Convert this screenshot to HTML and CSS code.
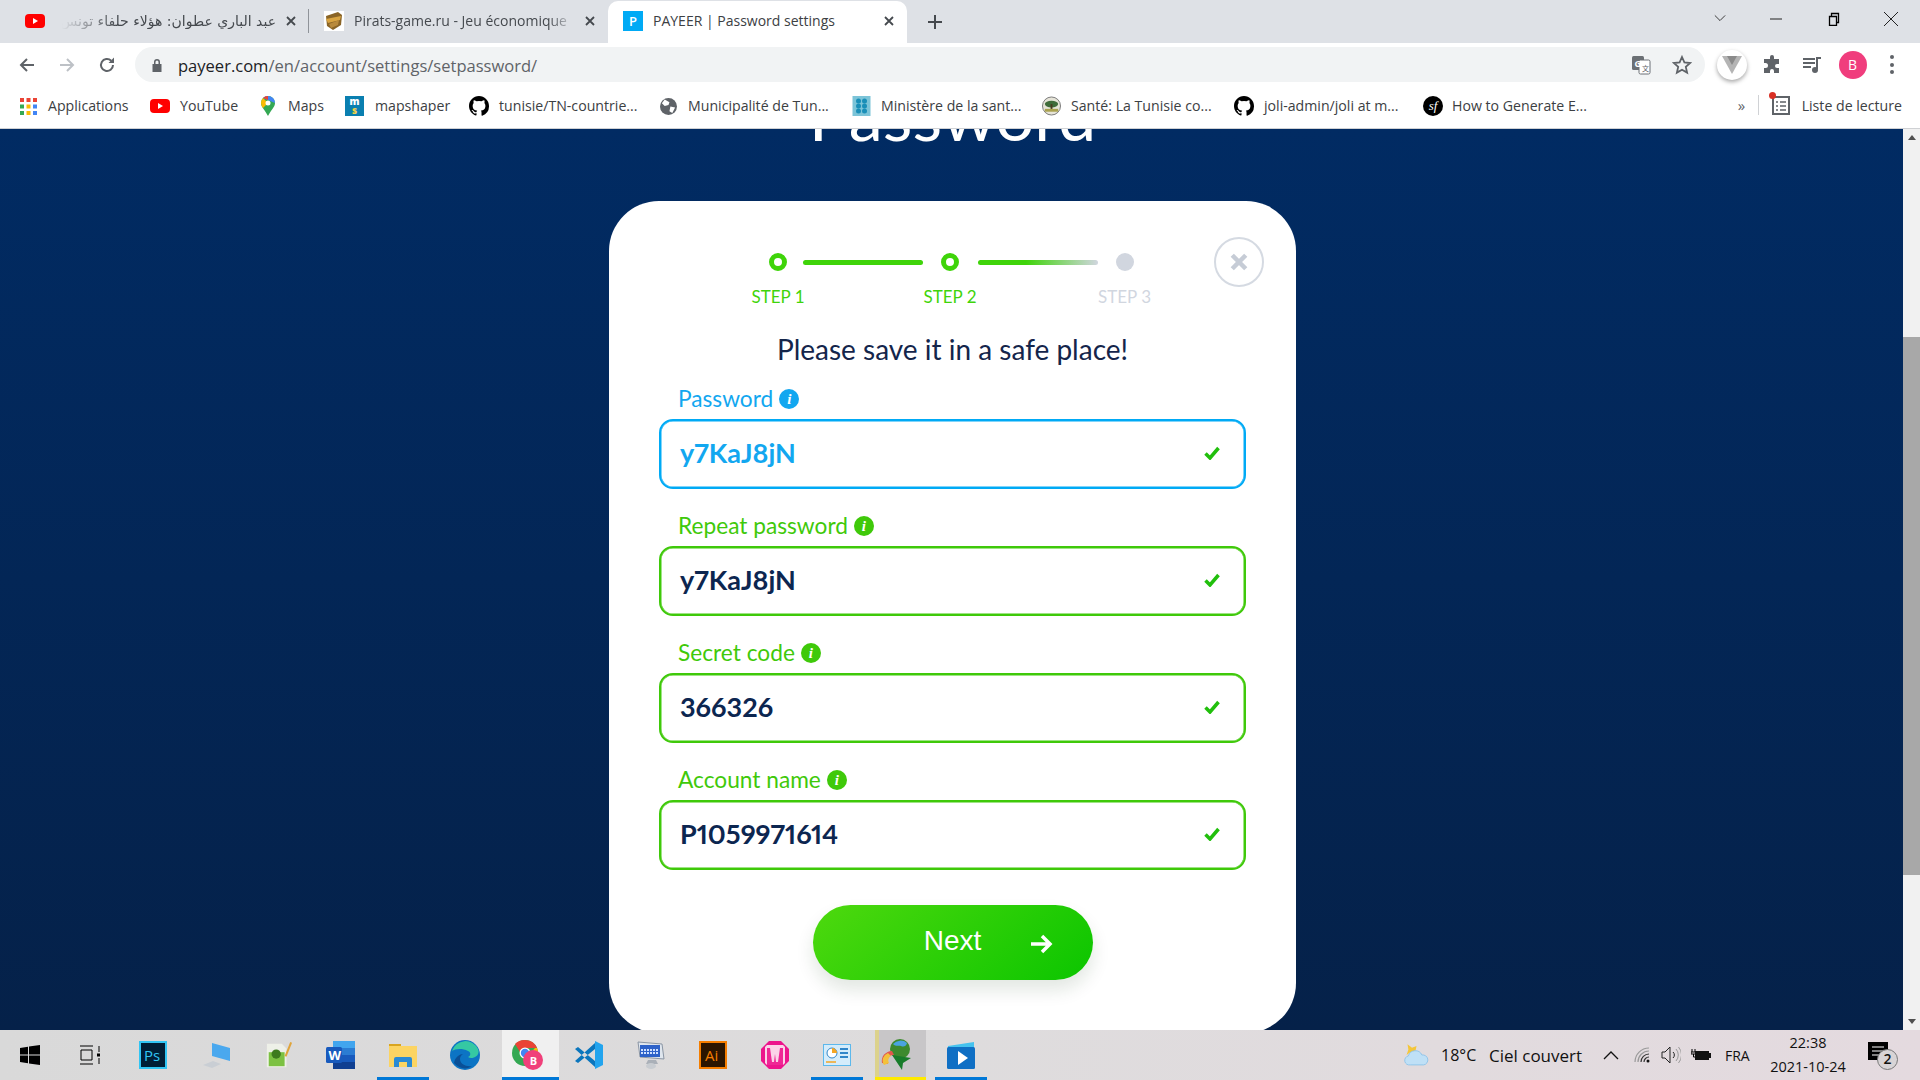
FILE: index.html
```html
<!DOCTYPE html>
<html lang="en">
<head>
<meta charset="utf-8">
<title>PAYEER | Password settings</title>
<link rel="stylesheet" href="styles.css">
</head>
<body>
<header class="tabstrip">
  <div class="tab">
    <svg class="fav" viewBox="0 0 20 14"><rect width="20" height="14" rx="4" fill="#f00"/><path d="M8 4l5 3-5 3z" fill="#fff"/></svg>
    <span class="tab-title fade rtl">عبد الباري عطوان: هؤلاء حلفاء تونس</span>
    <svg class="tab-x" viewBox="0 0 10 10"><path d="M1 1l8 8M9 1l-8 8"/></svg>
  </div>
  <i class="tab-sep"></i>
  <div class="tab">
    <svg class="fav" viewBox="0 0 20 20"><rect width="20" height="20" fill="#fff"/><path d="M2 5l12-4 4 3-1 10-8 5-6-4z" fill="#8a6426"/><path d="M2 8l15-3-1 4-12 3z" fill="#d9a441"/><path d="M5 13l10-4-1 5-7 3z" fill="#b98a3c"/></svg>
    <span class="tab-title fade">Pirats-game.ru - Jeu économique</span>
    <svg class="tab-x" viewBox="0 0 10 10"><path d="M1 1l8 8M9 1l-8 8"/></svg>
  </div>
  <div class="tab tab-active">
    <span class="fav fav-p">P</span>
    <span class="tab-title">PAYEER | Password settings</span>
    <svg class="tab-x" viewBox="0 0 10 10"><path d="M1 1l8 8M9 1l-8 8"/></svg>
  </div>
  <svg class="newtab" viewBox="0 0 14 14"><path d="M7 0v14M0 7h14"/></svg>
  <div class="winctl">
    <svg viewBox="0 0 14 14"><path d="M1 4l6 6 6-6"/></svg>
    <svg viewBox="0 0 14 14"><path d="M1 7h12"/></svg>
    <svg viewBox="0 0 14 14"><path d="M2.500 4.500h7v9h-7zM4.500 4V1.500h7v9H10"/></svg>
    <svg viewBox="0 0 14 14"><path d="M0 0l14 14M14 0L0 14"/></svg>
  </div>
</header>

<nav class="toolbar">
  <div class="navbtn"><svg viewBox="0 0 18 18" class="ico-stroke"><path d="M16 9H3M9 3L3 9l6 6"/></svg></div>
  <div class="navbtn dim"><svg viewBox="0 0 18 18" class="ico-stroke"><path d="M2 9h13M9 3l6 6-6 6"/></svg></div>
  <div class="navbtn"><svg viewBox="0 0 18 18" class="ico-stroke"><path d="M15 9a6 6 0 1 1-1.800-4.300"/><path class="solid" d="M16 1.500V7h-5.500z"/></svg></div>
  <div class="omnibox">
    <svg class="lock" viewBox="0 0 12 14"><path d="M3 6V4a3 3 0 0 1 6 0v2h1.500v8h-9V6zM4.500 6h3V4a1.500 1.500 0 0 0-3 0z" fill="#5f6368"/></svg>
    <span class="url"><b>payeer.com</b>/en/account/settings/setpassword/</span>
    <svg class="omni-ico" viewBox="0 0 20 20"><rect x="1" y="1" width="12" height="14" rx="1.500" fill="#6b6f74"/><rect x="8" y="5" width="11" height="14" rx="1.500" fill="#fff" stroke="#6b6f74"/><text x="3.500" y="12" class="gt">G</text><text x="11" y="16" class="gt2">文</text></svg>
    <svg class="omni-ico star" viewBox="0 0 20 20"><path d="M10 2l2.400 5.400 5.800.6-4.400 3.900 1.300 5.700L10 14.700l-5.100 2.900 1.300-5.700L1.800 8l5.800-.6z"/></svg>
  </div>
  <div class="ext-group">
    <div class="ext"><span class="vue"><svg viewBox="0 0 20 18"><path d="M0 0h20L10 18z" fill="#b4b4b4"/><path d="M5 0h10l-5 9z" fill="#8a8a8a"/></svg></span></div>
    <div class="ext"><svg viewBox="0 0 20 20" class="w20"><path d="M8 2a2 2 0 0 1 4 0v2h5v5h-2a2 2 0 0 0 0 4h2v5H12v-2a2 2 0 0 0-4 0v2H2v-5h1.500a2.500 2.500 0 0 0 0-5H2V4h6z" fill="#5f6368"/></svg></div>
    <div class="ext"><svg viewBox="0 0 20 20" class="w20"><path d="M1 4h12M1 8h12M1 12h8" stroke="#5f6368" stroke-width="2" fill="none"/><path d="M15 14V3h4" stroke="#5f6368" stroke-width="2" fill="none"/><circle cx="13" cy="15" r="3" fill="#5f6368"/></svg></div>
    <div class="ext"><span class="avatar">B</span></div>
    <div class="ext"><span class="dots"><i></i><i></i><i></i></span></div>
  </div>
</nav>

<nav class="bookmarks">
  <div class="bm-grid">
    <div class="bm"><svg viewBox="0 0 17 17" class="bm-ico"><g><rect width="4" height="4" fill="#ea4335"/><rect x="6.500" width="4" height="4" fill="#ea4335"/><rect x="13" width="4" height="4" fill="#ea4335"/><rect y="6.500" width="4" height="4" fill="#34a853"/><rect x="6.500" y="6.500" width="4" height="4" fill="#fbbc04"/><rect x="13" y="6.500" width="4" height="4" fill="#4285f4"/><rect y="13" width="4" height="4" fill="#34a853"/><rect x="6.500" y="13" width="4" height="4" fill="#fbbc04"/><rect x="13" y="13" width="4" height="4" fill="#4285f4"/></g></svg>Applications</div>
    <div class="bm"><svg viewBox="0 0 20 14" class="bm-ico wide"><rect width="20" height="14" rx="4" fill="#f00"/><path d="M8 4l5 3-5 3z" fill="#fff"/></svg>YouTube</div>
    <div class="bm"><svg viewBox="0 0 14 20" class="bm-ico tall"><path d="M7 0a7 7 0 0 1 7 7c0 4-4 7-7 13C4 14 0 11 0 7a7 7 0 0 1 7-7z" fill="#34a853"/><path d="M7 0a7 7 0 0 1 7 7L2 2a7 7 0 0 1 5-2z" fill="#4285f4"/><path d="M0 7a7 7 0 0 1 2-5l5 5-5 5a9 9 0 0 1-2-5z" fill="#fbbc04"/><path d="M2 2a7 7 0 0 1 5-2v4z" fill="#ea4335"/><circle cx="7" cy="7" r="2.500" fill="#fff"/></svg>Maps</div>
    <div class="bm"><span class="ms"><b>m</b><b class="ms2">s</b></span>mapshaper</div>
    <div class="bm"><svg viewBox="0 0 16 16" class="bm-ico gh"><path d="M8 0C3.580 0 0 3.580 0 8c0 3.540 2.290 6.530 5.470 7.590.4.070.55-.17.55-.38v-1.340c-2.010.37-2.530-.49-2.690-.94-.09-.23-.48-.94-.82-1.130-.28-.15-.68-.52-.01-.53.63-.01 1.080.58 1.230.82.720 1.210 1.870.87 2.330.66.070-.52.280-.87.510-1.070-1.780-.2-3.640-.89-3.640-3.950 0-.87.310-1.590.820-2.150-.08-.2-.360-1.020.08-2.120 0 0 .67-.21 2.200.82a7.600 7.600 0 0 1 4 0c1.530-1.040 2.200-.82 2.200-.82.440 1.100.160 1.920.080 2.120.51.560.82 1.270.82 2.150 0 3.070-1.870 3.750-3.650 3.950.29.250.54.730.54 1.480v2.200c0 .21.150.46.550.38A8 8 0 0 0 16 8c0-4.420-3.580-8-8-8z"/></svg>tunisie/TN-countrie...</div>
    <div class="bm"><svg viewBox="0 0 18 18" class="bm-ico"><circle cx="9" cy="9" r="9" fill="#5f6368"/><path d="M5 1.500l5 3-1 3-4 1-3-3zM11 9l5 1-3 6-3-2z" fill="#fff"/></svg>Municipalité de Tun...</div>
    <div class="bm"><svg viewBox="0 0 18 20" class="bm-ico big"><rect width="18" height="20" fill="#7cc4d8"/><g fill="#1a8fb8"><circle cx="6" cy="5" r="2.500"/><circle cx="12" cy="5" r="2.500"/><circle cx="6" cy="10" r="2.500"/><circle cx="12" cy="10" r="2.500"/><circle cx="6" cy="15" r="2.500"/><circle cx="12" cy="15" r="2.500"/></g></svg>Ministère de la sant...</div>
    <div class="bm"><svg viewBox="0 0 20 20" class="bm-ico big"><circle cx="10" cy="10" r="9.500" fill="#e6e4d8" stroke="#777"/><ellipse cx="10" cy="8" rx="7" ry="3.500" fill="#3f6b3a"/><rect x="9" y="8" width="2" height="6" fill="#4a3a20"/><rect x="3" y="13" width="14" height="3" fill="#a9a14f"/></svg>Santé: La Tunisie co...</div>
    <div class="bm"><svg viewBox="0 0 16 16" class="bm-ico gh"><path d="M8 0C3.580 0 0 3.580 0 8c0 3.540 2.290 6.530 5.470 7.590.4.070.55-.17.55-.38v-1.340c-2.010.37-2.530-.49-2.690-.94-.09-.23-.48-.94-.82-1.130-.28-.15-.68-.52-.01-.53.63-.01 1.080.58 1.230.82.720 1.210 1.870.87 2.330.66.070-.52.280-.87.510-1.070-1.780-.2-3.640-.89-3.640-3.950 0-.87.310-1.590.820-2.150-.08-.2-.360-1.020.08-2.120 0 0 .67-.21 2.200.82a7.600 7.600 0 0 1 4 0c1.530-1.040 2.200-.82 2.200-.82.440 1.100.160 1.920.080 2.120.51.560.82 1.270.82 2.150 0 3.070-1.870 3.750-3.650 3.950.29.250.54.730.54 1.480v2.200c0 .21.150.46.550.38A8 8 0 0 0 16 8c0-4.420-3.580-8-8-8z"/></svg>joli-admin/joli at m...</div>
    <div class="bm"><span class="sf">sf</span>How to Generate E...</div>
  </div>
  <div class="bm-right">
    <span class="more">»</span>
    <i class="bm-sep"></i>
    <span class="readlist"><svg viewBox="0 0 18 20" class="bm-ico"><rect x="1" y="2" width="16" height="17" fill="#fff" stroke="#5f6368" stroke-width="2"/><path d="M4 7h2M8 7h6M4 11h2M8 11h6M4 15h2M8 15h6" stroke="#5f6368" stroke-width="1.500"/></svg><i class="red-dot"></i></span>
    <span class="bm-label">Liste de lecture</span>
  </div>
</nav>

<main class="viewport">
  <div class="page">
    <h1 class="page-title">Password</h1>
    <section class="card">
      <button class="close" type="button" aria-label="Close"><svg viewBox="0 0 12 12"><path d="M1.500 1.500l9 9M10.500 1.500l-9 9"/></svg></button>
      <div class="dots-row">
        <i class="dot"></i><i class="bar"></i><i class="dot"></i><i class="bar bar-fade"></i><i class="dot dot-off"></i>
      </div>
      <div class="labels-row">
        <span>STEP 1</span><span>STEP 2</span><span class="off">STEP 3</span>
      </div>
      <h2 class="subtitle">Please save it in a safe place!</h2>
      <div class="fields">
        <div class="field field-blue">
          <div class="field-label">Password <i class="info">i</i></div>
          <div class="input"><span>y7KaJ8jN</span><svg class="check" viewBox="0 0 16 14"><path d="M1.500 7.500L6 12 14.500 2"/></svg></div>
        </div>
        <div class="field">
          <div class="field-label">Repeat password <i class="info">i</i></div>
          <div class="input"><span>y7KaJ8jN</span><svg class="check" viewBox="0 0 16 14"><path d="M1.500 7.500L6 12 14.500 2"/></svg></div>
        </div>
        <div class="field">
          <div class="field-label">Secret code <i class="info">i</i></div>
          <div class="input"><span>366326</span><svg class="check" viewBox="0 0 16 14"><path d="M1.500 7.500L6 12 14.500 2"/></svg></div>
        </div>
        <div class="field">
          <div class="field-label">Account name <i class="info">i</i></div>
          <div class="input"><span>P1059971614</span><svg class="check" viewBox="0 0 16 14"><path d="M1.500 7.500L6 12 14.500 2"/></svg></div>
        </div>
      </div>
      <button class="next" type="button"><span>Next</span><svg viewBox="0 0 24 20"><path d="M2 10h19M13 2l8 8-8 8"/></svg></button>
    </section>
  </div>
  <aside class="scrollbar">
    <span class="arrow-up"></span>
    <div class="track"><div class="thumb"></div></div>
    <span class="arrow-down"></span>
  </aside>
</main>

<footer class="taskbar">
  <div class="apps">
    <div class="app"><svg viewBox="0 0 20 20" class="s20"><path d="M0 3l8-1.200V9.500H0zM9 1.600L20 0v9.500H9zM0 10.500h8v7.700L0 17zM9 10.500h11V20L9 18.400z" fill="#000"/></svg></div>
    <div class="app"><svg viewBox="0 0 20 20" class="s20 line"><path d="M0 1h13M0 19h13M1 5h11v10H1zM19 1v6M19 13v6"/><rect class="solid" x="17" y="8.500" width="3.500" height="3"/></svg></div>
    <div class="app"><svg viewBox="0 0 28 28" class="s28"><rect x="1" y="1" width="26" height="26" fill="#001e36" stroke="#31c5f4" stroke-width="2"/><text x="5" y="20" class="ps">Ps</text></svg></div>
    <div class="app"><svg viewBox="0 0 28 28" class="s28"><path d="M9 2l18 5v13L9 15z" fill="#4aa8ee"/><path d="M0 24l10-4 8 3-9 4z" fill="#c9ced4"/></svg></div>
    <div class="app"><svg viewBox="0 0 28 30" class="s28"><path d="M1 3h16l5 5v20H1z" fill="#eef0e8"/><rect x="3" y="12" width="17" height="15" fill="#7cc142"/><circle cx="11" cy="14" r="5" fill="#3d7a1e"/><path d="M20 16l6-15 2 1-6 15z" fill="#e0a43a"/></svg></div>
    <div class="app"><svg viewBox="0 0 30 30" class="s30"><rect x="7" y="1" width="22" height="28" rx="2" fill="#2b7cd3"/><rect x="7" y="8" width="22" height="7" fill="#2b7cd3"/><rect x="7" y="1" width="22" height="7" fill="#41a5ee"/><rect x="7" y="15" width="22" height="7" fill="#185abd"/><rect x="7" y="22" width="22" height="7" fill="#103f91"/><rect y="7" width="16" height="16" rx="1.500" fill="#185abd"/><text x="2.500" y="19.500" class="wd">W</text></svg></div>
    <div class="app app-on"><svg viewBox="0 0 28 28" class="s28"><path d="M0 3h12v4H0z" fill="#d9a520"/><rect y="5" width="28" height="21" fill="#fcd462"/><path d="M5 26V18a2 2 0 0 1 2-2h14a2 2 0 0 1 2 2v8h-5v-5h-8v5z" fill="#2a8ad4"/></svg></div>
    <div class="app"><svg viewBox="0 0 30 30" class="s30"><circle cx="15" cy="15" r="15" fill="#0c74c4"/><path d="M2 11a14 14 0 0 1 26-2c3 7-6 11-10 8 3-1 3-5 0-6-6-3-13-2-16 0z" fill="#35c8a3"/><path d="M10 19c0 5 6 8 12 7-5 4-13 3-18-3 1-6 6-9 9-9-2 1-3 3-3 5z" fill="#0a4f96"/></svg></div>
    <div class="app app-chrome"><svg viewBox="0 0 32 32" class="s32"><circle cx="13" cy="14" r="13" fill="#34a853"/><path d="M13 1a13 13 0 0 1 12 8H13a5 5 0 0 0-5 4L3 5a13 13 0 0 1 10-4z" fill="#ea4335"/><path d="M25 9a13 13 0 0 1-6 17l-4-8 8-9z" fill="#fbbc04"/><circle cx="13" cy="14" r="5.500" fill="#fff"/><circle cx="13" cy="14" r="4.200" fill="#4285f4"/><circle cx="21" cy="21" r="10" fill="#f0407a"/><text x="17.800" y="25.500" class="chb">B</text></svg></div>
    <div class="app"><svg viewBox="0 0 30 30" class="s30"><path d="M1 9l3-2 17 14v6zM1 21l3 2 17-14V3z" fill="#0b76bd"/><path d="M21 1l8 4v20l-8 4z" fill="#22a4ee"/></svg></div>
    <div class="app"><svg viewBox="0 0 30 30" class="s30"><path d="M2 2l24 2 2 15-24-2z" fill="#dfe6ee" stroke="#8a95a3"/><rect x="4" y="5" width="20" height="12" fill="#2d62c9"/><path d="M5 10h18M5 13h18" stroke="#cfe0ff" stroke-width="2" stroke-dasharray="2 1"/><path d="M12 20h8l2 4h-12z" fill="#aab0b8"/><ellipse cx="15" cy="26" rx="5" ry="3" fill="#c8ccd1"/></svg></div>
    <div class="app"><svg viewBox="0 0 28 28" class="s28"><rect x="1" y="1" width="26" height="26" fill="#2b1500" stroke="#f47d00" stroke-width="2"/><text x="6" y="20" class="ai">Ai</text></svg></div>
    <div class="app"><svg viewBox="0 0 28 28" class="s28"><path d="M8 0h12l8 8v12l-8 8H8l-8-8V8z" fill="#ed148c"/><path d="M6 4h16l2 2v16l-2 2H6l-2-2V6z" fill="#fbd3e8"/><path d="M6 7h3l2 14h2l1-8 1 8h2l2-14h3v17H6z" fill="#ed148c" opacity=".9"/></svg></div>
    <div class="app app-on"><svg viewBox="0 0 28 22" class="s28"><rect width="28" height="22" fill="#5cb8ec"/><rect x="1" y="1" width="26" height="20" fill="#d4ecfb"/><circle cx="9" cy="9" r="5" fill="#fff" stroke="#3186c9"/><path d="M9 9V4a5 5 0 0 1 5 5z" fill="#f5a623"/><path d="M17 5h8M17 9h8M17 13h8" stroke="#3186c9" stroke-width="2"/><path d="M3 18h10" stroke="#f5a623" stroke-width="1.500"/></svg></div>
    <div class="app app-idm"><svg viewBox="0 0 32 32" class="s32"><circle cx="19" cy="10" r="10" fill="#3d8a2e"/><path d="M12 5a10 10 0 0 1 14-1c-1 4-4 4-6 3s-5 1-8-2z" fill="#4aa3e0"/><path d="M1 24a10 10 0 0 1 10-12l2 4a6 6 0 0 0-6 9z" fill="#e2574c"/><path d="M3 26a8 8 0 0 1 4-12l3 3a5 5 0 0 0-2 7z" fill="#f3c13a"/><path d="M11 16l19 3-8 5-1 7z" fill="#187c2a"/></svg></div>
    <div class="app app-on"><svg viewBox="0 0 30 30" class="s30"><path d="M2 6l26-4v6H2z" fill="#45c2ee"/><rect x="1" y="7" width="28" height="22" rx="1.500" fill="#0f6fc4"/><path d="M12 11l10 7-10 7z" fill="#fff"/></svg></div>
  </div>
  <div class="tray">
    <svg viewBox="0 0 30 26" class="weather"><path d="M8 10l-4 3 2-6-1-6 5 4 5-2-1 5z" fill="#f4c63a"/><path d="M8 24a5 5 0 0 1-2-10 8 8 0 0 1 15-1 5.500 5.500 0 0 1 2 11z" fill="#bfe0f6" stroke="#8cc3ea"/></svg>
    <span class="tray-temp">18°C</span>
    <span class="tray-sky">Ciel couvert</span>
    <svg viewBox="0 0 16 10" class="chev"><path d="M1 9l7-7 7 7"/></svg>
    <svg viewBox="0 0 16 16" class="wifi"><path d="M1 15A14 14 0 0 1 15 1M4 15A11 11 0 0 1 15 4" stroke="#999"/><path d="M7 15a8 8 0 0 1 8-8M10 15a5 5 0 0 1 5-5" stroke="#333"/><circle cx="14" cy="14" r="1.500" fill="#111"/></svg>
    <svg viewBox="0 0 20 18" class="speaker"><path d="M1 6h3l5-5v16l-5-5H1z" fill="none" stroke="#222"/><path d="M12 6a4 4 0 0 1 0 6" stroke="#222" fill="none"/><path d="M15 3a9 9 0 0 1 0 12M17.500 1a12 12 0 0 1 0 16" stroke="#999" fill="none"/></svg>
    <svg viewBox="0 0 20 12" class="battery"><path d="M1 0v3M4 0v3M0 3h5v2H0zM2.500 5v3h2" stroke="#000" fill="none"/><rect x="4" y="2" width="14" height="9" fill="#111"/><rect x="18" y="4" width="2" height="5" fill="#111"/></svg>
    <span class="tray-lang">FRA</span>
    <div class="clock"><span>22:38</span><span>2021-10-24</span></div>
    <div class="notif"><svg viewBox="0 0 20 18"><rect width="20" height="18" fill="#000"/><path d="M4 5h12M4 9h12M4 13h8" stroke="#fff" stroke-width="1.200"/></svg><i class="notif-badge">2</i></div>
  </div>
</footer>
</body>
</html>
```
FILE: styles.css
```css
* { box-sizing: border-box; }
html, body { margin: 0; height: 100%; }
body {
  width: 1920px; height: 1080px; overflow: hidden;
  display: flex; flex-direction: column;
  font-family: "Open Sans", "DejaVu Sans", sans-serif;
  color: #3c4043;
}
i { font-style: normal; }

/* tab strip */
.tabstrip { height: 43px; flex: none; background: #dee1e6; display: flex; align-items: center; padding-left: 10px; }
.tab { width: 299px; height: 43px; display: flex; align-items: center; padding: 0 13px 2px 15px; flex: none; margin-right: -1px; }
.tab-active { background: #fff; border-radius: 10px 10px 0 0; margin-left: 1px; margin-top: 2px; padding-bottom: 4px; }
.fav { width: 20px; height: 20px; flex: none; display: block; }
.fav-p { background: #00aaf5; color: #fff; font-size: 13px; font-weight: 600; text-align: center; line-height: 20px; }
.tab-title { flex: 1; margin: 0 10px 0 10px; font-size: 14px; white-space: nowrap; overflow: hidden; color: #45494e; }
.tab-active .tab-title { color: #3c4043; }
.fade { -webkit-mask-image: linear-gradient(90deg, #000 88%, transparent 100%); mask-image: linear-gradient(90deg, #000 88%, transparent 100%); }
.rtl { direction: rtl; text-align: right; font-family: "DejaVu Sans", sans-serif; font-size: 14px; -webkit-mask-image: linear-gradient(270deg, #000 72%, transparent 97%); mask-image: linear-gradient(270deg, #000 72%, transparent 97%); }
.tab-x { width: 10px; height: 10px; flex: none; fill: none; stroke: #45494e; stroke-width: 1.800; }
.tab-sep { width: 1px; height: 24px; background: #8f9399; flex: none; margin: 0 0 2px 0; }
.newtab { width: 14px; height: 14px; flex: none; margin-left: 22px; fill: none; stroke: #45494e; stroke-width: 2; }
.winctl { margin-left: auto; display: grid; grid-template-columns: repeat(4, 57.500px); justify-items: center; margin-bottom: 6px; }
.winctl svg { width: 14px; height: 14px; fill: none; stroke: #222; stroke-width: 1; }
.winctl svg:first-child { width: 12px; height: 12px; margin-left: 2px; }
.winctl svg:nth-child(3) { stroke-width: 1.300; stroke: #000; }

/* toolbar */
.toolbar { height: 43px; flex: none; background: #fff; display: flex; align-items: center; padding-left: 7px; }
.navbtn { width: 40px; display: flex; justify-content: center; }
.navbtn svg { width: 18px; height: 18px; }
.ico-stroke { fill: none; stroke: #5f6368; stroke-width: 2; }
.ico-stroke .solid { fill: #5f6368; stroke: none; }
.dim .ico-stroke { stroke: #bdc1c6; }
.omnibox { width: 1570px; height: 35px; margin-left: 8px; border-radius: 18px; background: #f1f3f4; display: flex; align-items: center; padding-left: 16px; padding-right: 13px; }
.lock { width: 12px; height: 14px; flex: none; }
.url { margin-left: 15px; font-size: 16.550px; line-height: 22px; padding-top: 2px; color: #5f6368; }
.url b { font-weight: 400; color: #202124; }
.omni-ico { width: 20px; height: 20px; margin-left: 20px; flex: none; }
.omni-ico:nth-of-type(2) { margin-left: auto; }
.star { fill: none; stroke: #5f6368; stroke-width: 1.800; margin-left: 21px; }
.gt { font-size: 9px; font-weight: 700; fill: #fff; font-family: "Open Sans", sans-serif; }
.gt2 { font-size: 7px; fill: #5f6368; font-family: "Noto Sans CJK SC", sans-serif; }
.ext-group { display: grid; grid-template-columns: repeat(5, 40px); margin-left: 7px; justify-items: center; align-items: center; }
.ext { display: flex; align-items: center; justify-content: center; }
.w20 { width: 20px; height: 20px; }
.vue { width: 30px; height: 30px; border-radius: 50%; background: #fff; box-shadow: 0 2px 4px rgba(0,0,0,.35); display: flex; align-items: center; justify-content: center; }
.vue svg { width: 20px; height: 18px; }
.avatar { width: 28px; height: 28px; border-radius: 50%; background: #f03d7d; color: #fff; font-size: 14px; text-align: center; line-height: 28px; margin-left: 1px; }
.dots { display: flex; flex-direction: column; gap: 3.500px; }
.dots i { width: 4px; height: 4px; border-radius: 50%; background: #5f6368; }

/* bookmarks */
.bookmarks { height: 43px; flex: none; background: #fff; border-bottom: 1px solid #cfd1d4; display: flex; align-items: center; padding-left: 20px; }
.bm-grid { display: grid; grid-template-columns: 130px 110px 85px 124px 191px 192px 190px 192px 189px 170px; flex: none; }
.bm { display: flex; align-items: center; gap: 11px; font-size: 14.150px; line-height: 20px; color: #3c4043; white-space: nowrap; margin-top: -2px; }
.bm-ico { width: 17px; height: 17px; flex: none; }
.bm-ico.wide { width: 20px; height: 14px; margin-right: -1px; }
.bm-ico.tall { width: 14px; height: 20px; margin-left: 1px; margin-right: 2px; }
.bm-ico.gh { width: 20px; height: 20px; margin-right: -1px; }
.bm-ico.big { width: 19px; height: 20px; margin-right: -1px; }
.ms { width: 19px; height: 20px; background: #0a7fb0; color: #fff; font-size: 10px; line-height: 9px; text-align: center; display: flex; flex-direction: column; font-weight: 700; padding-top: 1px; }
.ms b { display: block; }
.ms2 { color: #f0d24a; }
.sf { width: 20px; height: 20px; border-radius: 50%; background: #000; color: #fff; font-family: "Liberation Serif", serif; font-style: italic; font-size: 13px; line-height: 19px; text-align: center; flex: none; margin-right: -2px; }
.bm-right { margin-left: auto; display: flex; align-items: center; padding-right: 18px; margin-top: -4px; }
.more { font-size: 15px; color: #5f6368; width: 12px; margin-left: 3px; margin-right: -3px; }
.bm-sep { width: 1px; height: 20px; background: #d0d2d5; margin: 0 13px 0 11px; }
.readlist { position: relative; display: flex; }
.readlist .bm-ico { width: 18px; height: 20px; }
.red-dot { position: absolute; left: -3px; top: -3px; width: 7px; height: 7px; border-radius: 50%; background: #d93025; }
.bm-label { margin-left: 12px; font-size: 14.150px; color: #3c4043; white-space: nowrap; }

/* page */
.viewport { flex: 1; min-height: 0; display: flex; overflow: hidden; }
.page { flex: 1; background: linear-gradient(#012b63, #052149); overflow: hidden; padding-left: 2px; display: flex; flex-direction: column; align-items: center; }
.page-title { margin: -62px 0 0; height: 134px; line-height: 96px; font-family: Lato, sans-serif; font-weight: 400; font-size: 68.500px; color: #fff; flex: none; }
.card { width: 687px; height: 832px; flex: none; background: #fff; border-radius: 50px; padding: 52px 50px 0; position: relative; }
.close { position: absolute; right: 32px; top: 36px; width: 50px; height: 50px; border: 2px solid #d5dae2; border-radius: 50%; background: #fff; padding: 0; display: flex; align-items: center; justify-content: center; }
.close svg { width: 18px; height: 18px; fill: none; stroke: #c6ccd6; stroke-width: 3; }
.dots-row { display: flex; align-items: center; margin-left: 110px; }
.dot { width: 18px; height: 18px; border-radius: 50%; border: 5px solid #3fd40a; background: #fff; flex: none; }
.dot-off { border: 0; background: #d1d6df; }
.bar { width: 120px; height: 5px; border-radius: 3px; background: #3fd40a; margin: 0 18px 0 16px; flex: none; }
.bar-fade { background: linear-gradient(90deg, #3fd40a 40%, #d1d6df 100%); margin: 0 18px 0 19px; }
.labels-row { display: grid; grid-template-columns: repeat(3, 100px); column-gap: 72px; margin: 16px 0 0 69px; font: 400 17px/20px Lato, sans-serif; color: #3fd40a; text-align: center; }
.labels-row .off { color: #d1d6df; margin-left: 5px; }
.subtitle { margin: 24px 0 17px; font: 400 28px/36px Lato, sans-serif; color: #14254b; text-align: center; }
.fields { display: flex; flex-direction: column; gap: 22px; }
.field { display: flex; flex-direction: column; gap: 5px; color: #3fc90a; }
.field-blue { color: #12a7f0; }
.field-label { height: 30px; padding-left: 19px; font: 400 22.700px/30px Lato, sans-serif; display: flex; align-items: center; gap: 6px; }
.info { width: 20px; height: 20px; border-radius: 50%; background: currentColor; display: flex; align-items: center; justify-content: center; font: italic 700 15px/20px "Liberation Serif", serif; -webkit-text-fill-color: #fff; }
.input { height: 70px; border: 2px solid currentColor; box-shadow: inset 0 0 0 .5px currentColor; border-radius: 14px; display: flex; align-items: center; justify-content: space-between; padding: 0 24px 3px 19px; background: #fff; font: 700 27px/32px Lato, sans-serif; font-variant-numeric: proportional-nums; color: #3fc90a; }
.field-blue .input { color: #00aaf5; }
.input span { color: #0c2650; }
.field-blue .input span { color: #12a7f0; }
.check { width: 16px; height: 14px; fill: none; stroke: #21bf0c; stroke-width: 3.500; }
.next { width: 280px; height: 75px; margin: 35px auto 0; display: flex; align-items: center; justify-content: center; border: 0; border-radius: 38px; background: linear-gradient(140deg, #4ed90e, #0bc500); box-shadow: 0 10px 18px rgba(20,60,20,.12); color: #fff; font: 400 28px/36px "Liberation Sans", sans-serif; position: relative; padding: 0 0 3px 0; }
.next svg { position: absolute; right: 40px; top: 29px; width: 24px; height: 20px; fill: none; stroke: #fff; stroke-width: 3.500; }

/* scrollbar */
.scrollbar { width: 17px; flex: none; background: #f1f1f1; display: flex; flex-direction: column; align-items: center; }
.arrow-up, .arrow-down { flex: none; width: 0; border-left: 4px solid transparent; border-right: 4px solid transparent; margin: 6px 0; height: 5px; }
.arrow-up { border-bottom: 5px solid #505050; }
.arrow-down { border-top: 5px solid #505050; }
.track { flex: 1; width: 100%; padding-top: 191px; }
.thumb { height: 538px; background: #a8a8a8; }

/* taskbar */
.taskbar { height: 50px; flex: none; background: linear-gradient(90deg, #d9d9d9 0%, #dedcdd 50%, #e4dadf 100%); display: flex; align-items: stretch; }
.apps { display: grid; grid-template-columns: 60px 60px 66px repeat(13, 62px); flex: none; }
.app { display: flex; align-items: center; justify-content: center; position: relative; }
.app-on::after, .app-chrome::after, .app-idm::after { content: ""; position: absolute; left: 5px; right: 5px; bottom: 0; height: 3px; background: #0078d7; }
.app-chrome { background: #f0f0f0; margin: 0 -1px 0 6px; padding-right: 5px; }
.app-chrome::after { left: 0; right: 0; }
.app-idm { background: #c8c6c8; margin: 0 4px 0 7px; border-left: 4px solid #dcd28c; padding-right: 12px; }
.app-idm::after { left: -4px; right: 0; background: #ffea00; }
.s20 { width: 20px; height: 20px; }
.s28 { width: 28px; height: 28px; }
.s30 { width: 30px; height: 30px; }
.s32 { width: 32px; height: 32px; }
.line { fill: none; stroke: #000; stroke-width: 1; }
.line .solid { fill: #000; stroke: none; }
.ps { font: 400 15px "Open Sans", sans-serif; fill: #31c5f4; }
.ai { font: 400 15px "Open Sans", sans-serif; fill: #f47d00; }
.wd { font: 700 13px "Open Sans", sans-serif; fill: #fff; }
.chb { font: 700 11px "Open Sans", sans-serif; fill: #fff; }
.tray { margin-left: auto; display: flex; align-items: center; padding-right: 22px; color: #111; font-size: 16px; }
.weather { width: 27px; height: 24px; flex: none; margin-right: 11px; }
.tray-temp { width: 48px; white-space: nowrap; }
.tray-sky { width: 114px; white-space: nowrap; font-size: 17px; }
.chev { width: 16px; height: 10px; fill: none; stroke: #111; stroke-width: 1.300; }
.wifi { width: 16px; height: 16px; margin-left: 15px; fill: none; stroke-width: 1.200; }
.speaker { width: 20px; height: 18px; margin-left: 11px; }
.battery { width: 20px; height: 12px; margin-left: 10px; }
.tray-lang { margin-left: 14px; width: 44px; font-size: 14px; }
.clock { width: 78px; display: flex; flex-direction: column; align-items: center; gap: 4px; font-size: 14.500px; line-height: 20px; }
.notif { width: 30px; height: 30px; margin-left: 21px; position: relative; }
.notif svg { width: 20px; height: 18px; display: block; margin-top: 2px; }
.notif-badge { position: absolute; left: 9px; top: 9px; width: 21px; height: 21px; border-radius: 50%; background: #d8d4d6; border: 1px solid #777; font-size: 14px; font-weight: 600; text-align: center; line-height: 18px; }
```
